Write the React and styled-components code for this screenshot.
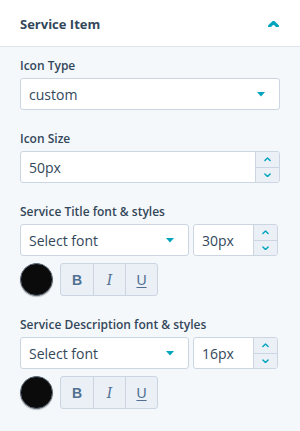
import styled, { createGlobalStyle } from "styled-components";

const GlobalStyle = createGlobalStyle`
  * { box-sizing: border-box; }
  html, body { margin: 0; padding: 0; }
  body {
    background: #f5f8fa;
    font-family: "Open Sans", "Noto Sans", sans-serif;
    color: #33475b;
  }
`;

const Panel = styled.div`
  width: 300px;
  min-height: 431px;
  background: #f5f8fa;
`;
const Header = styled.div`
  display: flex;
  align-items: center;
  justify-content: space-between;
  height: 47px;
  padding: 2px 21px 0 20px;
  background: #fff;
  border-bottom: 1px solid #dfe3eb;
`;
const Title = styled.h2`
  margin: 0;
  font-size: 13px;
  font-weight: 700;
  color: #33475b;
`;
const Body = styled.div`
  display: flex;
  flex-direction: column;
  gap: 21px;
  padding: 11px 20px 20px;
`;
const Field = styled.div`
  display: flex;
  flex-direction: column;
`;
const Label = styled.label`
  font-size: 12px;
  font-weight: 600;
  line-height: 16px;
  margin-bottom: 4px;
  color: #33475b;
`;
const Select = styled.div`
  display: flex;
  align-items: center;
  justify-content: space-between;
  width: ${(p) => p.width || "100%"};
  height: 32px;
  padding: 0 14px 0 8px;
  background: #fff;
  border: 1px solid #cbd6e2;
  border-radius: 3px;
  font-size: 14px;
  color: #33475b;
`;
const NumberBox = styled.div`
  display: flex;
  width: ${(p) => p.width || "100%"};
  height: 32px;
  background: #fff;
  border: 1px solid #cbd6e2;
  border-radius: 3px;
  overflow: hidden;
`;
const NumberValue = styled.div`
  flex: 1;
  display: flex;
  align-items: center;
  padding-left: ${(p) => p.pad || 8}px;
  font-size: 14px;
  color: #33475b;
`;
const Stepper = styled.div`
  display: flex;
  flex-direction: column;
  width: 24px;
  border-left: 1px solid #cbd6e2;
  background: #eaf0f6;
`;
const StepButton = styled.div`
  flex: 1;
  display: flex;
  align-items: center;
  justify-content: center;
  & + & {
    border-top: 1px solid #cbd6e2;
  }
`;
const Row = styled.div`
  display: flex;
  gap: 4px;
`;
const StyleRow = styled.div`
  display: flex;
  align-items: center;
  gap: 7px;
  margin-top: 7px;
`;
const Swatch = styled.div`
  width: 33px;
  height: 33px;
  border-radius: 50%;
  background: ${(p) => p.color};
  border: 1px solid #5b6a78;
  box-shadow: 0 1px 1px rgba(0, 0, 0, 0.25);
`;
const ButtonGroup = styled.div`
  display: flex;
  border: 1px solid #cbd6e2;
  border-radius: 3px;
  background: #eaf0f6;
  overflow: hidden;
`;
const StyleButton = styled.div`
  width: 32px;
  height: 31px;
  display: flex;
  align-items: center;
  justify-content: center;
  font-size: 14px;
  color: #516f90;
  font-family: "Liberation Sans", sans-serif;
  & + & {
    border-left: 1px solid #cbd6e2;
  }
`;
const BoldGlyph = styled.span`
  font-weight: 700;
  font-size: 14px;
`;
const ItalicGlyph = styled.span`
  font-style: italic;
  font-family: "DejaVu Serif", serif;
  font-size: 14px;
`;
const UnderlineGlyph = styled.span`
  font-size: 14px;
  text-decoration: underline;
  text-underline-offset: 2px;
`;

const Caret = () => (
  <svg width="8" height="5" viewBox="0 0 8 5">
    <path d="M0 0 H8 L4 4.5 Z" fill="#00a4bd" />
  </svg>
);
const Chevron = ({ up, size = 8, color = "#00a4bd", width = 1.8 }) => (
  <svg width={size} height={size / 2 + 1} viewBox="0 0 8 5">
    <path
      d={up ? "M1 4 L4 1 L7 4" : "M1 1 L4 4 L7 1"}
      fill="none"
      stroke={color}
      strokeWidth={width}
      strokeLinecap="round"
      strokeLinejoin="round"
    />
  </svg>
);

const NumberInput = ({ value, width, pad }) => (
  <NumberBox width={width}>
    <NumberValue pad={pad}>{value}</NumberValue>
    <Stepper>
      <StepButton>
        <Chevron up size={7} width={1.6} />
      </StepButton>
      <StepButton>
        <Chevron size={7} width={1.6} />
      </StepButton>
    </Stepper>
  </NumberBox>
);

const FontField = ({ label, size }) => (
  <Field>
    <Label>{label}</Label>
    <Row>
      <Select width="169px">
        Select font
        <Caret />
      </Select>
      <NumberInput value={size} width="85px" pad={8} />
    </Row>
    <StyleRow>
      <Swatch color="#0b0b0b" />
      <ButtonGroup>
        <StyleButton>
          <BoldGlyph>B</BoldGlyph>
        </StyleButton>
        <StyleButton>
          <ItalicGlyph>I</ItalicGlyph>
        </StyleButton>
        <StyleButton>
          <UnderlineGlyph>U</UnderlineGlyph>
        </StyleButton>
      </ButtonGroup>
    </StyleRow>
  </Field>
);

export default function App() {
  return (
    <>
      <GlobalStyle />
      <Panel>
        <Header>
          <Title>Service Item</Title>
          <Chevron up size={11} width={2.4} />
        </Header>
        <Body>
          <Field>
            <Label>Icon Type</Label>
            <Select>
              custom
              <Caret />
            </Select>
          </Field>
          <Field>
            <Label>Icon Size</Label>
            <NumberInput value="50px" />
          </Field>
          <FontField label="Service Title font & styles" size="30px" />
          <FontField label="Service Description font & styles" size="16px" />
        </Body>
      </Panel>
    </>
  );
}
